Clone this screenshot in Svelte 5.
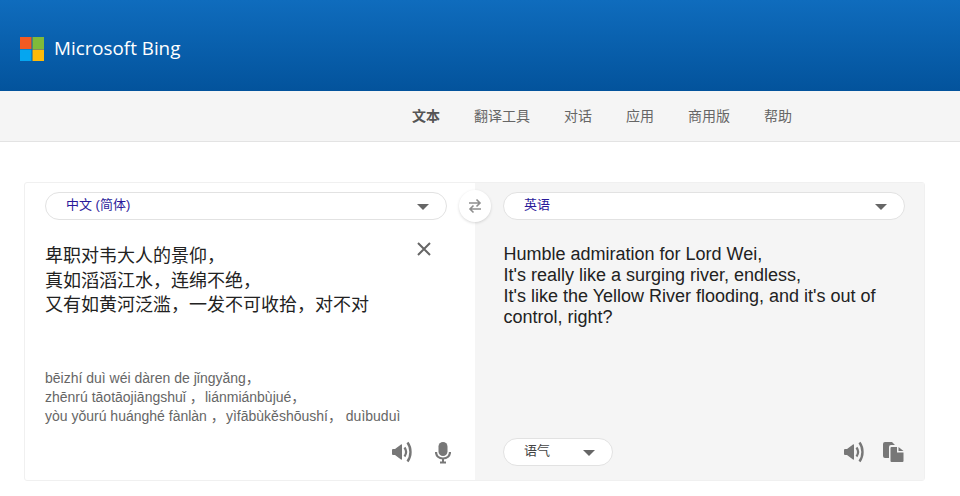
<script>
    const tabs = ["文本", "翻译工具", "对话", "应用", "商用版", "帮助"];
    const source = ["卑职对韦大人的景仰，", "真如滔滔江水，连绵不绝，", "又有如黄河泛滥，一发不可收拾，对不对"];
    const pinyin = [
        "bēizhí duì wéi dàren de jǐngyǎng，",
        "zhēnrú tāotāojiāngshuǐ ，\u200aliánmiánbùjué，",
        "yòu yǒurú huánghé fànlàn ，\u200ayìfābùkěshōushí， duìbuduì"
    ];
</script>

{#snippet speaker()}
    <svg width="21" height="24" viewBox="0 0 21 24">
        <path d="M1 10q0-1 1-1h2l6-4.500q1-.5 1 .5v14q0 1-1 .5L4 15H2q-1 0-1-1z" fill="#777" />
        <path d="M13.500 7.500c2 2.800 2 6.200 0 9" fill="none" stroke="#777" stroke-width="2.200" />
        <path d="M16.500 2.500c4 5.500 4 13.500 0 19" fill="none" stroke="#777" stroke-width="2.400" />
    </svg>
{/snippet}

<header class="top">
    <svg class="logo" width="24" height="24" viewBox="0 0 24 24">
        <rect width="11.500" height="12" fill="#f25a22" />
        <rect x="12.500" width="11.500" height="12" fill="#7fba3a" />
        <rect y="12.500" width="11.500" height="11.500" fill="#05a6f0" />
        <rect x="12.500" y="12.500" width="11.500" height="11.500" fill="#ffba08" />
    </svg>
    <span class="brand">Microsoft Bing</span>
</header>

<nav class="tabs">
    {#each tabs as tab, i}
        <span class:active={i === 0}>{tab}</span>
    {/each}
</nav>

<main class="card">
    <section class="pane left">
        <div class="pill lang">
            <span>中文 (简体)</span>
            <i class="caret"></i>
        </div>
        <div class="input">
            <div class="source">
                {#each source as line}
                    <div>{line}</div>
                {/each}
            </div>
            <svg class="clear" width="14" height="14" viewBox="0 0 14 14">
                <path d="M1 1l12 12M13 1L1 13" stroke="#666" stroke-width="2" fill="none" />
            </svg>
        </div>
        <div class="pinyin">
            {#each pinyin as line}
                <div>{line}</div>
            {/each}
        </div>
        <div class="actions">
            {@render speaker()}
            <svg width="16" height="24" viewBox="0 0 16 24">
                <rect x="3.500" y="2" width="9" height="14" rx="4.500" fill="#777" />
                <path d="M1 12c0 4 3 6.500 7 6.500s7-2.500 7-6.500" fill="none" stroke="#777" stroke-width="2.200" />
                <path d="M8 18v4.500M5 22.500h6" stroke="#777" stroke-width="2" fill="none" />
            </svg>
        </div>
    </section>

    <section class="pane right">
        <div class="pill lang">
            <span>英语</span>
            <i class="caret"></i>
        </div>
        <div class="target">Humble admiration for Lord Wei,<br />It's really like a surging river, endless,<br />It's like the Yellow River flooding, and it's out of control, right?</div>
        <div class="footer">
            <div class="pill tone">
                <span>语气</span>
                <i class="caret"></i>
            </div>
            <div class="actions">
                {@render speaker()}
                <svg width="21" height="22" viewBox="0 0 21 22">
                    <path d="M0 3a2 2 0 0 1 2-2h7l3 3H8a2 2 0 0 0-2 2v11H2a2 2 0 0 1-2-2z" fill="#777" />
                    <path d="M7.500 7a1 1 0 0 1 1-1h5.500v5.500h6.500V20a1 1 0 0 1-1 1h-11a1 1 0 0 1-1-1z" fill="#777" />
                    <path d="M15.500 6l5 4h-5z" fill="#777" />
                </svg>
            </div>
        </div>
    </section>

    <button class="swap" aria-label="swap">
        <svg width="16" height="16" viewBox="0 0 16 16">
            <path d="M2 5h11M9.500 1.500L13 5 9.500 8.500M14 11H3M6.500 7.500L3 11l3.500 3.500" stroke="#8f8f8f" stroke-width="1.600" fill="none" />
        </svg>
    </button>
</main>

<style>
    :global(body) {
        background: #fff;
        font-family: "Liberation Sans", "Noto Sans CJK SC", sans-serif;
    }
    .top {
        height: 91px;
        box-sizing: border-box;
        padding: 37px 0 0 20px;
        display: flex;
        align-items: flex-start;
        gap: 10px;
        background: linear-gradient(#0f6cbd, #03539c);
    }
    .brand {
        color: #fff;
        font-family: "Open Sans", sans-serif;
        font-size: 18.800px;
        font-weight: 500;
        line-height: 23px;
    }
    .tabs {
        height: 51px;
        box-sizing: border-box;
        padding: 0 0 2px 412px;
        display: flex;
        align-items: center;
        gap: 34px;
        background: #f5f5f5;
        border-bottom: 1px solid #e3e3e3;
        font-size: 14px;
        color: #666;
    }
    .tabs .active {
        font-weight: bold;
        color: #555;
    }
    .card {
        position: relative;
        display: flex;
        width: 901px;
        height: 299px;
        box-sizing: border-box;
        margin: 40px 0 0 24px;
        border: 1px solid #f0f0f0;
        border-radius: 3px;
    }
    .pane {
        box-sizing: border-box;
        display: flex;
        flex-direction: column;
        width: 450px;
        height: 100%;
        padding-top: 9px;
    }
    .left {
        padding-left: 20px;
        padding-right: 28px;
    }
    .right {
        background: #f5f5f5;
        padding-left: 28px;
        padding-right: 19px;
    }
    .pill {
        display: flex;
        align-items: center;
        justify-content: space-between;
        box-sizing: border-box;
        height: 28px;
        background: #fff;
        border: 1px solid #e2e2e2;
        border-radius: 14px;
        font-size: 13px;
        line-height: 24px;
    }
    .pill span {
        margin-top: -3px;
    }
    .lang {
        padding: 0 17px 0 20px;
        color: #2a1a9a;
    }
    .caret {
        width: 0;
        height: 0;
        margin-top: 1px;
        border-left: 6px solid transparent;
        border-right: 6px solid transparent;
        border-top: 6px solid #666;
    }
    .input {
        display: flex;
        justify-content: space-between;
        height: 150px;
        padding-top: 24.300px;
        box-sizing: border-box;
    }
    .source {
        font-size: 18px;
        line-height: 24.500px;
        color: #222;
    }
    .clear {
        margin: -2px 16px 0 0;
    }
    .pinyin {
        font-size: 14px;
        line-height: 19px;
        color: #666;
        margin-top: -1px;
        width: 420px;
    }
    .actions {
        display: flex;
        align-items: center;
        gap: 23px;
        justify-content: flex-end;
        margin: 14px -4px 0 0;
    }
    .target {
        height: 191px;
        box-sizing: border-box;
        padding: 24px 0 0 0.500px;
        font-size: 18px;
        line-height: 21px;
        color: #222;
    }
    .footer {
        display: flex;
        justify-content: space-between;
        align-items: center;
        margin: 27px 1px 0 0;
    }
    .footer .actions {
        margin: 0;
        gap: 19px;
    }
    .tone {
        width: 110px;
        padding: 0 17px 0 20px;
        color: #444;
    }
    .swap {
        position: absolute;
        left: 434px;
        top: 7px;
        width: 32px;
        height: 32px;
        padding: 0;
        display: flex;
        align-items: center;
        justify-content: center;
        background: #fff;
        border: none;
        border-radius: 50%;
        box-shadow: 0 1px 3px rgba(0, 0, 0, 0.15);
    }
</style>
